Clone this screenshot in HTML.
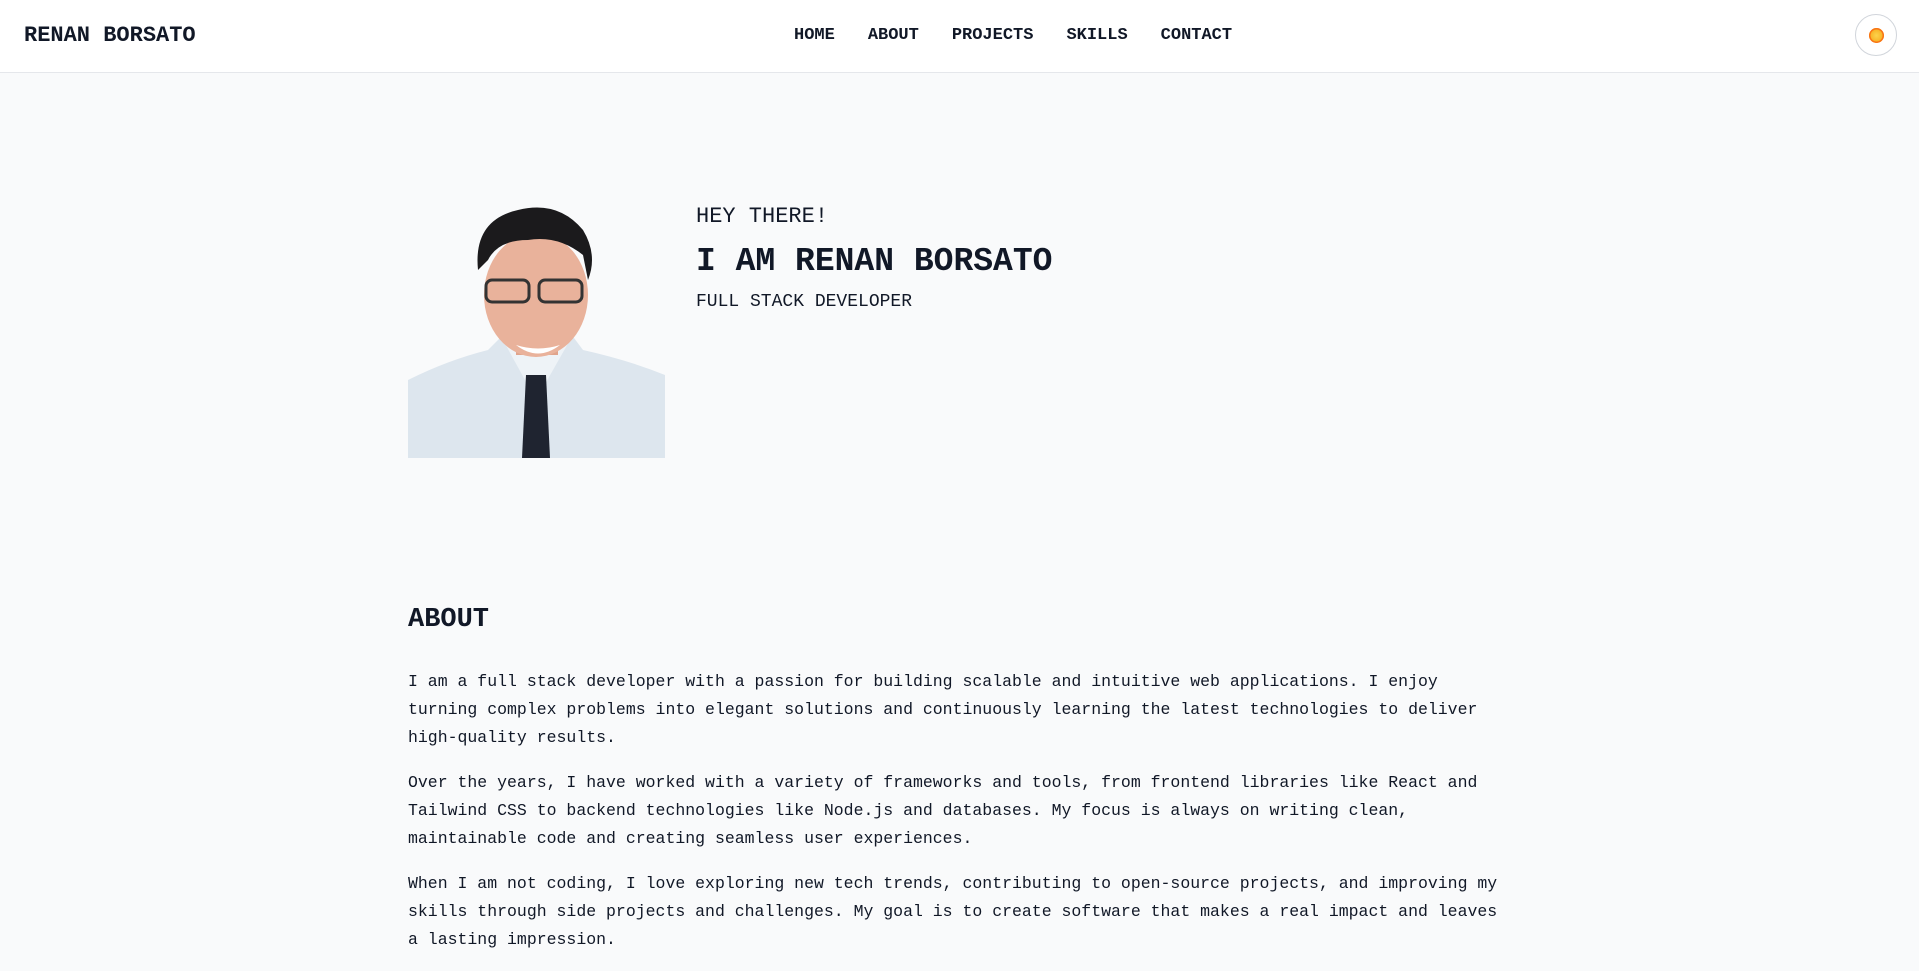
<!DOCTYPE html>
<html><head><meta charset="utf-8"><style>
*{margin:0;padding:0;box-sizing:border-box}
body{width:1919px;height:915px;overflow:hidden;background:#f9fafb;font-family:"Liberation Mono",monospace;color:#111827}
header{position:absolute;top:0;left:0;width:1919px;height:73px;background:#fff;border-bottom:1px solid #e5e7eb}
.logo{position:absolute;left:24px;top:22px;font-size:22px;font-weight:bold;line-height:28px}
nav{position:absolute;left:794px;top:25px;font-size:17px;font-weight:bold;line-height:22px;white-space:nowrap}
nav span{margin-right:33px}
.tog{position:absolute;left:1855px;top:14px;width:42px;height:42px;border:1px solid #d1d5db;border-radius:50%;background:#fff}
.tog i{position:absolute;left:13px;top:13px;width:15px;height:15px;border-radius:50%;background:radial-gradient(#fcd34d,#f59e0b);box-shadow:0 0 0 1.5px #f97316 inset}
.photo{position:absolute;left:408px;top:200px}
.hey{position:absolute;left:696px;top:204px;font-size:22px;line-height:26px}
.name{position:absolute;left:696px;top:241px;font-size:33px;font-weight:bold;line-height:42px}
.role{position:absolute;left:696px;top:291px;font-size:18px;line-height:22px}
.about{position:absolute;left:408px;top:602px;width:1102px}
h2{font-size:27px;font-weight:bold;line-height:36px;margin-bottom:30px}
p{font-size:16.5px;line-height:28px;margin-bottom:17px}
</style></head><body>
<header>
<div class="logo">RENAN BORSATO</div>
<nav><span>HOME</span><span>ABOUT</span><span>PROJECTS</span><span>SKILLS</span><span>CONTACT</span></nav>
<div class="tog"><i></i></div>
</header>
<svg class="photo" width="257" height="258" viewBox="0 0 257 258">
<path d="M0 180 Q40 160 80 150 L100 130 L160 130 L175 150 Q220 160 257 175 L257 258 L0 258Z" fill="#dde6ee"/>
<path d="M95 140 L128 200 L162 140 L150 130 L106 130Z" fill="#eef3f7"/>
<path d="M118 175 L138 175 L142 258 L114 258Z" fill="#1f2430"/>
<rect x="108" y="120" width="42" height="35" fill="#e0a48c"/>
<ellipse cx="128" cy="95" rx="52" ry="62" fill="#e9b29b"/>
<path d="M70 70 Q65 20 110 10 Q150 0 175 30 Q190 55 180 80 L175 55 Q150 35 120 40 Q90 40 80 60 Z" fill="#1b1a1c"/>
<rect x="78" y="80" width="43" height="22" rx="6" fill="none" stroke="#333" stroke-width="3"/>
<rect x="131" y="80" width="43" height="22" rx="6" fill="none" stroke="#333" stroke-width="3"/>
<path d="M108 145 Q130 162 152 145 Q130 152 108 145Z" fill="#fff"/>
</svg>
<div class="hey">HEY THERE!</div>
<div class="name">I AM RENAN BORSATO</div>
<div class="role">FULL STACK DEVELOPER</div>
<div class="about">
<h2>ABOUT</h2>
<p>I am a full stack developer with a passion for building scalable and intuitive web applications. I enjoy turning complex problems into elegant solutions and continuously learning the latest technologies to deliver high-quality results.</p>
<p>Over the years, I have worked with a variety of frameworks and tools, from frontend libraries like React and Tailwind CSS to backend technologies like Node.js and databases. My focus is always on writing clean, maintainable code and creating seamless user experiences.</p>
<p>When I am not coding, I love exploring new tech trends, contributing to open-source projects, and improving my skills through side projects and challenges. My goal is to create software that makes a real impact and leaves a lasting impression.</p>
</div>
</body></html>
